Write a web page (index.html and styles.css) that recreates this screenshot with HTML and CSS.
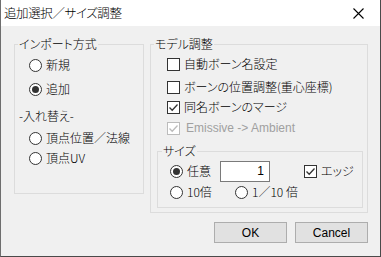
FILE: index.html
```html
<!DOCTYPE html>
<html lang="ja">
<head>
<meta charset="utf-8">
<link rel="stylesheet" href="styles.css">
</head>
<body>
<div class="window">
  <div class="titlebar">
    <span class="title">追加選択／サイズ調整</span>
    <span class="close"><svg width="11" height="11" viewBox="0 0 11 11"><path d="M0.5 0.5 L10.5 10.5 M10.5 0.5 L0.5 10.5" stroke="#000" stroke-width="1.1" fill="none"/></svg></span>
  </div>
  <div class="content">
    <div class="columns">
      <fieldset class="group import">
        <legend>インポート方式</legend>
        <div class="row r1"><span class="radio"></span><span class="lbl">新規</span></div>
        <div class="row r2"><span class="radio on"></span><span class="lbl">追加</span></div>
        <div class="sublabel">-入れ替え-</div>
        <div class="row r3"><span class="radio"></span><span class="lbl">頂点位置／法線</span></div>
        <div class="row r4"><span class="radio"></span><span class="lbl">頂点UV</span></div>
      </fieldset>
      <fieldset class="group model">
        <legend>モデル調整</legend>
        <div class="row c1"><span class="check"></span><span class="lbl">自動ボーン名設定</span></div>
        <div class="row c2"><span class="check"></span><span class="lbl">ボーンの位置調整(重心座標)</span></div>
        <div class="row c3"><span class="check on"><svg width="11" height="11" viewBox="0 0 11 11"><path d="M1.5 5.5 L4.2 8.3 L9.5 2.5" stroke="#333" stroke-width="1.3" fill="none"/></svg></span><span class="lbl">同名ボーンのマージ</span></div>
        <div class="row c4 disabled"><span class="check on"><svg width="11" height="11" viewBox="0 0 11 11"><path d="M1.5 5.5 L4.2 8.3 L9.5 2.5" stroke="#bcbcbc" stroke-width="1.3" fill="none"/></svg></span><span class="lbl latin">Emissive -&gt; Ambient</span></div>
        <fieldset class="group size">
          <legend>サイズ</legend>
          <div class="row s1">
            <span class="radio on"></span><span class="lbl w-any">任意</span>
            <span class="input">1</span>
            <span class="check on edge"><svg width="11" height="11" viewBox="0 0 11 11"><path d="M1.5 5.5 L4.2 8.3 L9.5 2.5" stroke="#333" stroke-width="1.3" fill="none"/></svg></span><span class="lbl">エッジ</span>
          </div>
          <div class="row s2">
            <span class="radio"></span><span class="lbl w-10">10倍</span>
            <span class="radio"></span><span class="lbl">1／10 倍</span>
          </div>
        </fieldset>
      </fieldset>
    </div>
    <div class="buttons">
      <button class="btn">OK</button>
      <button class="btn">Cancel</button>
    </div>
  </div>
</div>
</body>
</html>
```

FILE: styles.css
```css
* { box-sizing: border-box; }
html, body { margin: 0; padding: 0; background: #6e6e6e; }
body {
  font-family: "Noto Sans CJK JP", "Liberation Sans", sans-serif;
  font-size: 12px;
  font-weight: 300;
  color: #000;
  font-feature-settings: "palt";
}
.window {
  width: 381px;
  height: 257px;
  background: #f0f0f0;
  border-left: 1px solid #6e6e6e;
  border-right: 1px solid #4a4a4a;
  border-bottom: 1px solid #4a4a4a;
  display: flex;
  flex-direction: column;
}
.titlebar {
  height: 26px;
  background: #fff;
  display: flex;
  align-items: center;
  justify-content: space-between;
  padding-left: 3px;
  padding-right: 16px;
}
.title { font-size: 12.5px; line-height: 26px; letter-spacing: -0.4px; }
.close { display: flex; width: 11px; height: 11px; }
.content { flex: 1; display: flex; flex-direction: column; }
.columns {
  display: flex;
  align-items: flex-start;
  margin-top: 10px;
  margin-left: 13px;
  gap: 6px;
}
.group {
  margin: 0;
  padding: 0;
  border: 1px solid #dcdcdc;
  min-width: 0;
}
.group legend {
  padding: 0 1px;
  margin-left: 3px;
  line-height: 16px;
  height: 16px;
}
.import { width: 130px; height: 158px; }
.model { width: 218px; height: 177px; }
.row {
  display: flex;
  align-items: center;
  height: 20px;
  line-height: 20px;
  white-space: nowrap;
}
.radio {
  width: 13px;
  height: 13px;
  border: 1px solid #333;
  border-radius: 50%;
  background: #fff;
  display: flex;
  align-items: center;
  justify-content: center;
  flex: none;
}
.radio.on::after {
  content: "";
  width: 7px;
  height: 7px;
  border-radius: 50%;
  background: #333;
}
.check {
  width: 13px;
  height: 13px;
  border: 1px solid #333;
  background: #fff;
  display: flex;
  align-items: center;
  justify-content: center;
  flex: none;
}
.lbl { margin-left: 4px; }
.import .row { margin-left: 14px; }
.r1 { margin-top: 3px; }
.r2 { margin-top: 4px; }
.sublabel { margin-top: 7px; margin-left: 4px; line-height: 20px; height: 20px; }
.r3 { margin-top: 2px; }
.model > .row { margin-left: 16px; }
.c1 { margin-top: 2px; }
.c2 { margin-top: 3px; }
.c3 { margin-top: 0; }
.c4 { margin-top: 1px; }
.disabled .check { border-color: #bcbcbc; }
.disabled .lbl { color: #a0a0a0; }
.latin { font-family: "Liberation Sans", sans-serif; font-weight: 400; margin-left: 6px; }
.size {
  margin: 5px 4px 0 6px;
  height: 65px;
}
.size legend { margin-left: 4px; }
.size .row { margin-left: 12px; }
.s1 { margin-top: 2px; }
.s2 { margin-top: 1px; }
.w-any { width: 33px; }
.input {
  width: 50px;
  height: 21px;
  border: 1px solid #7a7a7a;
  background: #fff;
  text-align: right;
  padding-right: 5px;
  line-height: 19px;
  font-family: "Liberation Sans", sans-serif;
  font-weight: 400;
}
.edge { margin-left: 34px; }
.w-10 { width: 48px; margin-left: 4px; }
.buttons {
  display: flex;
  justify-content: flex-end;
  gap: 8px;
  margin-top: 9px;
  margin-right: 12px;
}
.btn {
  width: 73px;
  height: 21px;
  background: #e1e1e1;
  border: 1px solid #adadad;
  font-family: "Liberation Sans", sans-serif;
  font-size: 12px;
  font-weight: 400;
  color: #000;
  padding: 0;
}
```
